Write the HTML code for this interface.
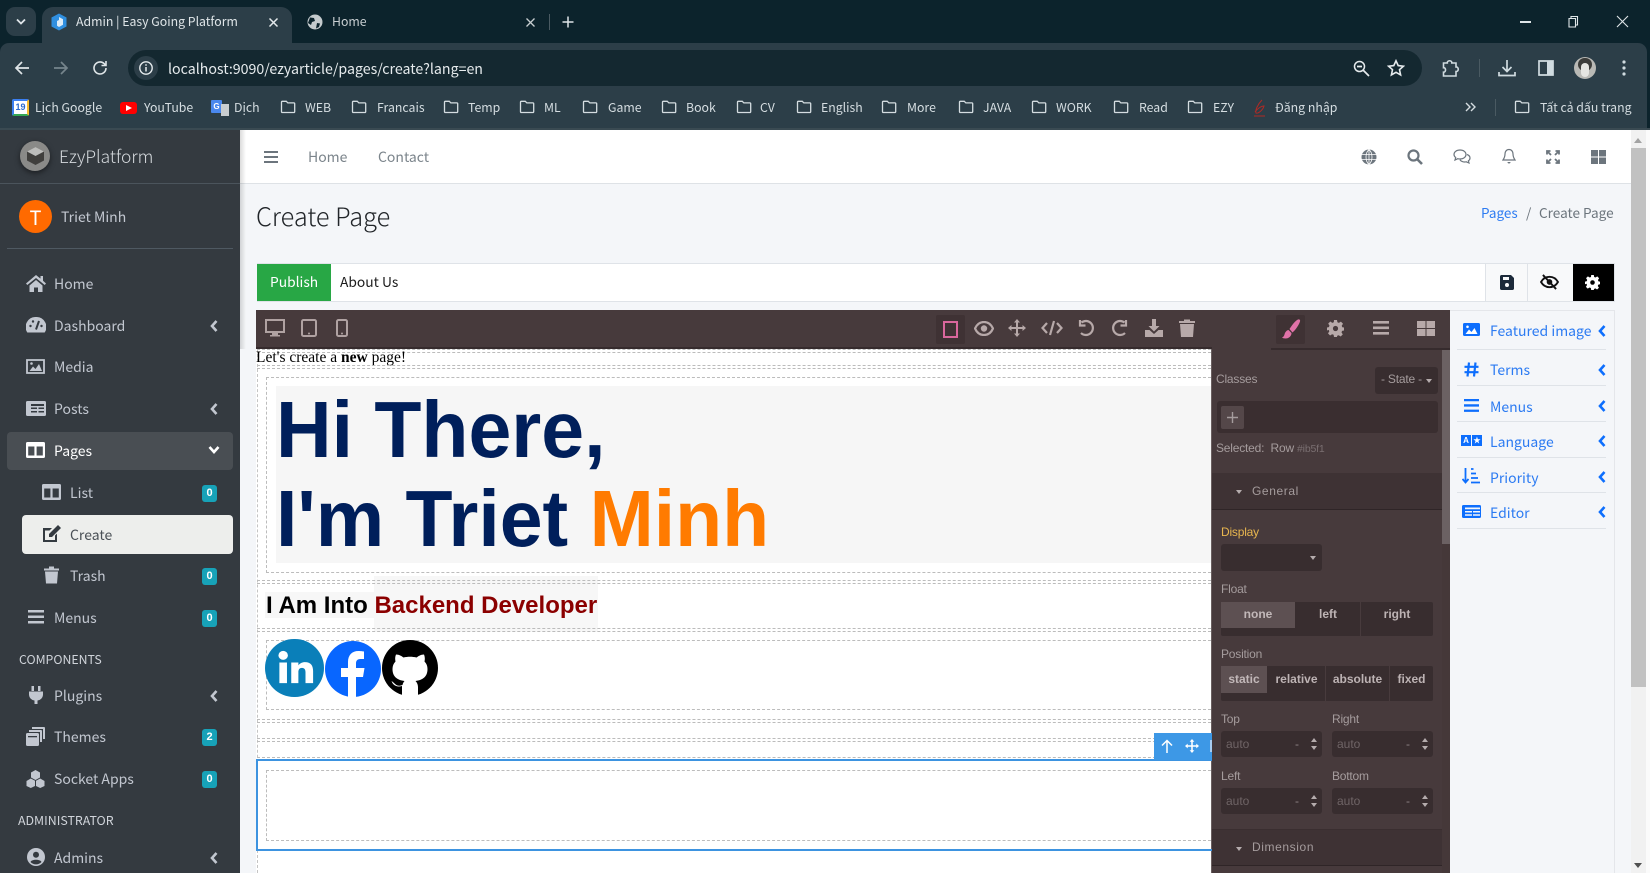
<!DOCTYPE html>
<html lang="en"><head><meta charset="utf-8"><title>Admin | Easy Going Platform</title>
<style>
*{box-sizing:border-box}
html,body{margin:0;padding:0;width:1650px;height:873px;overflow:hidden;background:#0c232c}
body{position:relative;font-family:"Noto Sans CJK JP","Liberation Sans",sans-serif}
div,span.t,svg{position:absolute}
.t{position:absolute;white-space:nowrap;line-height:20px;height:20px}
.c{color:#dfe5e8;font-size:12.3px}
.b{font-size:12.3px;color:#d5dde1;top:97px}
.s{font-size:14px;color:#c2c7d0}
.a{font-family:"Liberation Sans",Arial,sans-serif;font-size:12px;color:#a59c9d;letter-spacing:-.2px}
.r{font-size:14px;color:#2c7bf2}
.bd{left:202px;width:15px;height:17px;background:#17a2b8;border-radius:3px;color:#fff;font:bold 11px/17px "Liberation Sans",sans-serif;text-align:center}
.d2{left:257px;width:954px;height:4px;border-top:1px dashed #bcbcbc;border-bottom:1px dashed #bcbcbc}
.d1{left:257px;width:954px;height:1px;border-top:1px dashed #bcbcbc}
.bx{left:266px;width:945px;border:1px dashed #bcbcbc;border-right:0}
.btn{background:#382d2f}
.bt{font:bold 12px/20px "Liberation Sans",sans-serif;color:#bdb3b4;text-align:center;height:20px;position:absolute}
.in{background:#382d2f;border-radius:3px;width:101px;height:26px}
.au{position:absolute;left:5px;top:3px;font:12px/20px "Liberation Sans",sans-serif;color:#6f6466}
.das{position:absolute;left:74px;top:3px;font:12px/20px "Liberation Sans",sans-serif;color:#8c8284}
.up{position:absolute;left:90px;top:7px;width:0;height:0;border:3px solid transparent;border-top:0;border-bottom:4px solid #b5acad}
.dn{position:absolute;left:90px;top:15px;width:0;height:0;border:3px solid transparent;border-bottom:0;border-top:4px solid #b5acad}
.car{width:0;height:0;border:3px solid transparent;border-bottom:0;border-top:4px solid #b5acad}
.h{font:bold 77px/88px "Liberation Sans",sans-serif;height:88px;transform:scaleY(1.04);transform-origin:0 70.7px}
</style></head><body>
<svg width="0" height="0" style="position:absolute"><defs>
<symbol id="fo" viewBox="0 0 16 14"><path d="M1.5 2.2c0-.5.4-.9.9-.9h3.9l1.5 1.6h6c.5 0 .9.4.9.9v7.8c0 .5-.4.9-.9.9H2.400c-.5 0-.9-.4-.9-.9z" fill="none" stroke="#d5dde1" stroke-width="1.300"/></symbol>
<symbol id="cl" viewBox="0 0 10 14"><path d="M7.500 2 3 7l4.500 5" fill="none" stroke="currentColor" stroke-width="2.600"/></symbol>
</defs></svg>

<!-- chrome -->
<div style="left:0;top:0;width:1650px;height:130px;background:#0c232c"></div>
<div style="left:6px;top:7px;width:30px;height:29px;background:#2c3e48;border-radius:9px"></div>
<svg style="left:15px;top:18px" width="12" height="8" viewBox="0 0 12 8"><path d="M2 1.500 6 5.500l4-4" fill="none" stroke="#dfe5e8" stroke-width="1.800"/></svg>
<div style="left:0;top:43px;width:1647px;height:87px;background:#2c3e48;border-radius:9px 9px 0 0"></div>
<div style="left:42px;top:7px;width:250px;height:38px;background:#2c3e48;border-radius:11px 11px 0 0"></div>
<svg style="left:51px;top:13px" width="16" height="18" viewBox="0 0 16 18"><path d="M8 .5 15.500 4.500v9L8 17.500.5 13.500v-9z" fill="#2f8fe0"/><path d="M8 4l4 2.200v5.600L8 14l-2-1.200V8l2-1z" fill="#dcecf8"/></svg>
<span class="t c" style="left:76px;top:11px">Admin | Easy Going Platform</span>
<svg style="left:268px;top:17px" width="11" height="11" viewBox="0 0 11 11"><path d="M1.500 1.500l8 8m0-8-8 8" stroke="#e4e9ec" stroke-width="1.500"/></svg>
<svg style="left:307px;top:14px" width="16" height="16" viewBox="0 0 16 16"><circle cx="8" cy="8" r="7.500" fill="#c4cacd"/><path d="M3 3.500l4 .5 1 3-3 1-1 3-3-2zM10 9l3 .5-1 3.500-3 1.500z" fill="#0c232c"/></svg>
<span class="t c" style="left:332px;top:11px;color:#c8ced1">Home</span>
<svg style="left:525px;top:17px" width="11" height="11" viewBox="0 0 11 11"><path d="M1.500 1.500l8 8m0-8-8 8" stroke="#c8ced1" stroke-width="1.300"/></svg>
<div style="left:549px;top:14px;width:1px;height:16px;background:#4a5a62"></div>
<svg style="left:562px;top:16px" width="12" height="12" viewBox="0 0 12 12"><path d="M6 .5v11M.5 6h11" stroke="#dfe5e8" stroke-width="1.500"/></svg>
<div style="left:1520px;top:21px;width:11px;height:1.500px;background:#dfe5e8"></div>
<svg style="left:1567px;top:15px" width="12" height="13" viewBox="0 0 12 13"><path d="M2 3.500h6.500v8.500H2zM4 3.500V1.500h6.500v8.500H8.500" fill="none" stroke="#dfe5e8" stroke-width="1.100"/></svg>
<svg style="left:1616px;top:15px" width="13" height="13" viewBox="0 0 13 13"><path d="M1 1l11 11M12 1 1 12" stroke="#dfe5e8" stroke-width="1.100"/></svg>

<div style="left:0;top:128px;width:1650px;height:2px;background:#3a4a52"></div>
<svg style="left:14px;top:60px" width="16" height="16" viewBox="0 0 16 16"><path d="M15 8H2.500M8 2 2 8l6 6" fill="none" stroke="#dfe5e8" stroke-width="1.700"/></svg>
<svg style="left:53px;top:60px" width="16" height="16" viewBox="0 0 16 16"><path d="M1 8h12.500M8 2l6 6-6 6" fill="none" stroke="#76858c" stroke-width="1.700"/></svg>
<svg style="left:92px;top:60px" width="16" height="16" viewBox="0 0 16 16"><path d="M14 8a6 6 0 1 1-1.800-4.300L14 5.500M14 1v4.500H9.500" fill="none" stroke="#dfe5e8" stroke-width="1.600"/></svg>
<div style="left:128px;top:50px;width:1294px;height:36px;background:#142830;border-radius:18px"></div>
<div style="left:134px;top:56px;width:24px;height:24px;border-radius:12px;background:#2c3e48"></div>
<svg style="left:139px;top:61px" width="14" height="14" viewBox="0 0 14 14"><circle cx="7" cy="7" r="6.200" fill="none" stroke="#e6ebed" stroke-width="1.400"/><path d="M7 6v4.500M7 3.200v1.600" stroke="#e6ebed" stroke-width="1.500"/></svg>
<span class="t" style="left:168px;top:59px;font-size:14.200px;color:#e6ebed">localhost:9090/ezyarticle/pages/create?lang=en</span>
<svg style="left:1353px;top:60px" width="17" height="17" viewBox="0 0 17 17"><circle cx="6.500" cy="6.500" r="5" fill="none" stroke="#e6ebed" stroke-width="1.500"/><path d="M10 10l6 6M4 6.500h5" stroke="#e6ebed" stroke-width="1.700"/></svg>
<svg style="left:1387px;top:59px" width="18" height="18" viewBox="0 0 18 18"><path d="M9 1.800l2.200 4.800 5.200.6-3.900 3.500 1.100 5.200L9 13.300l-4.600 2.600 1.100-5.200-3.900-3.500 5.200-.6z" fill="none" stroke="#e6ebed" stroke-width="1.600"/></svg>
<svg style="left:1442px;top:58px" width="18" height="20" viewBox="0 0 18 20"><path d="M1.500 5h3.800c-.3-3 4.900-3 4.500 0h4.200v4c3-.3 3 4.700 0 4.500V18h-12.500v-3.800c2.700.3 2.700-5 0-4.500z" fill="none" stroke="#d0dbe0" stroke-width="1.600"/></svg>
<div style="left:1479px;top:59px;width:1px;height:18px;background:#4a5a62"></div>
<svg style="left:1498px;top:59px" width="18" height="18" viewBox="0 0 18 18"><path d="M9 1v11M4.500 8 9 12.500 13.500 8M1 13v3.500h16V13" fill="none" stroke="#d0dbe0" stroke-width="1.700"/></svg>
<svg style="left:1538px;top:60px" width="16" height="16" viewBox="0 0 16 16"><path d="M1 1h14v14H1z" fill="none" stroke="#d0dbe0" stroke-width="1.700"/><path d="M9 1h6v14H9z" fill="#d0dbe0"/></svg>
<div style="left:1574px;top:57px;width:22px;height:22px;border-radius:11px;background:#b9b9b5"></div>
<div style="left:1578px;top:58px;width:14px;height:13px;border-radius:7px;background:#3d3d3a"></div>
<div style="left:1581px;top:63px;width:8px;height:14px;border-radius:4px;background:#e6e6e2"></div>
<svg style="left:1622px;top:60px" width="4" height="16" viewBox="0 0 4 16"><circle cx="2" cy="2" r="1.600" fill="#d0dbe0"/><circle cx="2" cy="8" r="1.600" fill="#d0dbe0"/><circle cx="2" cy="14" r="1.600" fill="#d0dbe0"/></svg>

<!-- bookmarks -->
<div style="left:12px;top:99px;width:17px;height:17px;background:#fff;border:2px solid #3b7ff0;border-right-color:#f9bb2d;border-bottom-color:#34a853;border-radius:2px;color:#2a6ad0;font:bold 9px/13px 'Liberation Sans',sans-serif;text-align:center">19</div>
<span class="t b" style="left:35px">Lịch Google</span>
<div style="left:120px;top:102px;width:17px;height:12px;background:#f00;border-radius:3px"></div>
<svg style="left:126px;top:105px" width="6" height="6" viewBox="0 0 6 6"><path d="M0 0l6 3-6 3z" fill="#fff"/></svg>
<span class="t b" style="left:144px">YouTube</span>
<div style="left:211px;top:100px;width:11px;height:13px;background:#4a88ee;border-radius:1px;color:#fff;font:bold 8px/13px 'Liberation Sans',sans-serif;text-align:center">G</div>
<div style="left:221px;top:104px;width:8px;height:12px;background:#c9cdd0"></div>
<span class="t b" style="left:234px">Dịch</span>
<svg style="left:280px;top:100px" width="16" height="14"><use href="#fo"/></svg><span class="t b" style="left:305px">WEB</span>
<svg style="left:351px;top:100px" width="16" height="14"><use href="#fo"/></svg><span class="t b" style="left:377px">Francais</span>
<svg style="left:443px;top:100px" width="16" height="14"><use href="#fo"/></svg><span class="t b" style="left:468px">Temp</span>
<svg style="left:519px;top:100px" width="16" height="14"><use href="#fo"/></svg><span class="t b" style="left:544px">ML</span>
<svg style="left:582px;top:100px" width="16" height="14"><use href="#fo"/></svg><span class="t b" style="left:608px">Game</span>
<svg style="left:661px;top:100px" width="16" height="14"><use href="#fo"/></svg><span class="t b" style="left:686px">Book</span>
<svg style="left:736px;top:100px" width="16" height="14"><use href="#fo"/></svg><span class="t b" style="left:760px">CV</span>
<svg style="left:796px;top:100px" width="16" height="14"><use href="#fo"/></svg><span class="t b" style="left:821px">English</span>
<svg style="left:881px;top:100px" width="16" height="14"><use href="#fo"/></svg><span class="t b" style="left:907px">More</span>
<svg style="left:958px;top:100px" width="16" height="14"><use href="#fo"/></svg><span class="t b" style="left:983px">JAVA</span>
<svg style="left:1031px;top:100px" width="16" height="14"><use href="#fo"/></svg><span class="t b" style="left:1056px">WORK</span>
<svg style="left:1113px;top:100px" width="16" height="14"><use href="#fo"/></svg><span class="t b" style="left:1139px">Read</span>
<svg style="left:1187px;top:100px" width="16" height="14"><use href="#fo"/></svg><span class="t b" style="left:1213px">EZY</span>
<svg style="left:1253px;top:99px" width="14" height="18" viewBox="0 0 14 18"><path d="M9 1C5 5 2 11 3 14c2 1 7-3 8-7-3 0-7 3-9 6M1 17h11" fill="none" stroke="#b02a25" stroke-width="1"/></svg>
<span class="t b" style="left:1275px">Đăng nhập</span>
<svg style="left:1465px;top:102px" width="11" height="10" viewBox="0 0 11 10"><path d="M1 1l4 4-4 4M6 1l4 4-4 4" fill="none" stroke="#d5dde1" stroke-width="1.400"/></svg>
<div style="left:1495px;top:99px;width:1px;height:17px;background:#4a5a62"></div>
<svg style="left:1514px;top:100px" width="16" height="14"><use href="#fo"/></svg><span class="t b" style="left:1540px">Tất cả dấu trang</span>

<!-- sidebar -->
<div style="left:0;top:130px;width:240px;height:743px;background:#343a40"></div>
<div style="left:0;top:183px;width:240px;height:1px;background:#4b545c"></div>
<div style="left:20px;top:141px;width:30px;height:30px;border-radius:15px;background:#8a8a88;box-shadow:0 2px 6px rgba(0,0,0,.5)"></div>
<svg style="left:26px;top:146px" width="19" height="20" viewBox="0 0 19 20"><path d="M9.500 1 18 5.500v9L9.500 19 1 14.500v-9z" fill="#403f3d"/><path d="M9.500 1 18 5.500 9.500 10 1 5.500z" fill="#bdbdbb"/></svg>
<span class="t" style="left:59px;top:147px;font-size:17.400px;font-weight:300;color:#d5d9dd">EzyPlatform</span>
<div style="left:19px;top:200px;width:33px;height:33px;border-radius:17px;background:#ff6a00;color:#fff;font:20px/33px 'Noto Sans CJK JP',sans-serif;text-align:center">T</div>
<span class="t s" style="left:61px;top:207px">Triet Minh</span>
<div style="left:7px;top:248px;width:226px;height:1px;background:#4f5962"></div>

<div style="left:7px;top:432px;width:226px;height:38px;background:#494e53;border-radius:4px"></div>
<div style="left:22px;top:515px;width:211px;height:39px;background:#edeeec;border-radius:4px"></div>

<svg style="left:26px;top:275px" width="20" height="17" viewBox="0 0 20 17" fill="#c2c7d0"><path d="M10 0 0 8.500l1.300 1.500L10 3l8.700 7L20 8.500l-3-2.700V1h-2.500v2.600zM3.500 10.500V17H8v-4.500h4V17h4.500v-6.500L10 5z"/></svg>
<span class="t s" style="left:54px;top:274px">Home</span>
<svg style="left:26px;top:317px" width="20" height="16" viewBox="0 0 20 16"><path d="M10 0a10 10 0 0 0-8.700 15.500h17.400A10 10 0 0 0 10 0z" fill="#c2c7d0"/><path d="M10 12.500 13 4" stroke="#343a40" stroke-width="2"/><circle cx="4.500" cy="9" r="1.200" fill="#343a40"/><circle cx="7" cy="4.500" r="1.200" fill="#343a40"/><circle cx="15.500" cy="9" r="1.200" fill="#343a40"/></svg>
<span class="t s" style="left:54px;top:316px">Dashboard</span>
<svg style="left:26px;top:359px" width="19" height="15" viewBox="0 0 19 15"><path d="M1 1h17v13H1z" fill="none" stroke="#c2c7d0" stroke-width="1.800"/><path d="M3.500 12 7 7.500l2.500 2.500 3.500-5 3 7z" fill="#c2c7d0"/><circle cx="5.500" cy="4.500" r="1.300" fill="#c2c7d0"/></svg>
<span class="t s" style="left:54px;top:357px">Media</span>
<svg style="left:26px;top:401px" width="20" height="15" viewBox="0 0 20 15"><rect width="20" height="15" rx="1.500" fill="#c2c7d0"/><path d="M5 3h13v2H5zM5 6.500h6v1.500H5zM12.500 6.500H18v1.500h-5.500zM5 10h6v1.500H5zM12.500 10H18v1.500h-5.500z" fill="#343a40"/></svg>
<span class="t s" style="left:54px;top:399px">Posts</span>
<svg style="left:26px;top:442px" width="19" height="16" viewBox="0 0 19 16"><rect width="19" height="16" rx="1.500" fill="#fff"/><path d="M2.200 4.500h6.200v9H2.200zM10.600 4.500h6.200v9h-6.200z" fill="#494e53"/></svg>
<span class="t s" style="left:54px;top:441px;color:#fff">Pages</span>
<svg style="left:42px;top:484px" width="19" height="16" viewBox="0 0 19 16"><rect width="19" height="16" rx="1.500" fill="#c2c7d0"/><path d="M2.200 4.500h6.200v9H2.200zM10.600 4.500h6.200v9h-6.200z" fill="#343a40"/></svg>
<span class="t s" style="left:70px;top:483px">List</span>
<svg style="left:41px;top:524px" width="21" height="19" viewBox="0 0 21 19"><path d="M2 4h9L8.500 6.500H4V16h10v-4.500L16 9.500V18H2z" fill="#343a40"/><path d="M17 1l3 3-9 9H8v-3z" fill="#343a40"/></svg>
<span class="t s" style="left:70px;top:525px;color:#4a5056">Create</span>
<svg style="left:44px;top:566px" width="15" height="18" viewBox="0 0 15 18" fill="#c2c7d0"><path d="M0 2.500h5V.5h5v2h5v2H0zM1 5.500h13l-1 12H2z"/></svg>
<span class="t s" style="left:70px;top:566px">Trash</span>
<svg style="left:28px;top:610px" width="16" height="14" viewBox="0 0 16 14" fill="#c2c7d0"><path d="M0 0h16v2.500H0zM0 5.500h16V8H0zM0 11h16v2.500H0z"/></svg>
<span class="t s" style="left:54px;top:608px">Menus</span>
<span class="t" style="left:19px;top:649px;font-size:12.300px;color:#d0d4da">COMPONENTS</span>
<svg style="left:29px;top:686px" width="14" height="18" viewBox="0 0 14 18" fill="#c2c7d0"><path d="M2.500 0H5v5H2.500zM9 0h2.500v5H9zM0 5.500h14V9a6 6 0 0 1-5.500 5.500V18h-3v-3.500A6 6 0 0 1 0 9z"/></svg>
<span class="t s" style="left:54px;top:686px">Plugins</span>
<svg style="left:26px;top:727px" width="19" height="19" viewBox="0 0 19 19"><path d="M6 0h12a1 1 0 0 1 1 1v11h-2V2H6zM3 3h12a1 1 0 0 1 1 1v11h-2V5H3z" fill="#c2c7d0"/><rect y="6" width="13" height="13" rx="1.500" fill="#c2c7d0"/><rect x="2" y="9" width="9" height="1.300" fill="#343a40"/></svg>
<span class="t s" style="left:54px;top:727px">Themes</span>
<svg style="left:26px;top:770px" width="19" height="18" viewBox="0 0 19 18" fill="#c2c7d0"><path d="M9.500 0 14 2.500v5L9.500 10 5 7.500v-5z"/><path d="M4.800 8.500l4.200 2.300V16l-4.200 2L.5 16v-5z"/><path d="M14.200 8.500l4.300 2.500v5l-4.300 2L10 16v-5.200z"/></svg>
<span class="t s" style="left:54px;top:769px">Socket Apps</span>
<span class="t" style="left:18px;top:810px;font-size:12.400px;color:#d0d4da">ADMINISTRATOR</span>
<svg style="left:27px;top:848px" width="18" height="18" viewBox="0 0 18 18"><circle cx="9" cy="9" r="9" fill="#c2c7d0"/><circle cx="9" cy="6.800" r="3" fill="#343a40"/><path d="M3.500 14c1-3 10-3 11 0a7.500 7.500 0 0 1-11 0z" fill="#343a40"/></svg>
<span class="t s" style="left:54px;top:848px">Admins</span>

<svg style="left:209px;top:319px;color:#c2c7d0" width="10" height="14"><use href="#cl"/></svg>
<svg style="left:209px;top:402px;color:#c2c7d0" width="10" height="14"><use href="#cl"/></svg>
<svg style="left:209px;top:689px;color:#c2c7d0" width="10" height="14"><use href="#cl"/></svg>
<svg style="left:209px;top:851px;color:#c2c7d0" width="10" height="14"><use href="#cl"/></svg>
<svg style="left:208px;top:445px" width="12" height="10" viewBox="0 0 12 10"><path d="M1.500 2 6 7l4.500-5" fill="none" stroke="#fff" stroke-width="2.600"/></svg>
<div class="bd" style="top:485px">0</div><div class="bd" style="top:568px">0</div><div class="bd" style="top:610px">0</div><div class="bd" style="top:729px">2</div><div class="bd" style="top:771px">0</div>

<!-- main -->
<div style="left:240px;top:130px;width:1391px;height:743px;background:#f4f6f9"></div>
<div style="left:240px;top:130px;width:1391px;height:54px;background:#fff;border-bottom:1px solid #dee2e6"></div>
<div style="left:240px;top:130px;width:6px;height:743px;background:linear-gradient(90deg,rgba(0,0,0,.14),rgba(0,0,0,0))"></div>
<svg style="left:264px;top:151px" width="14" height="12" viewBox="0 0 14 12" fill="#6c757d"><path d="M0 0h14v2H0zM0 5h14v2H0zM0 10h14v2H0z"/></svg>
<span class="t" style="left:308px;top:147px;font-size:14px;color:#7b848b">Home</span>
<span class="t" style="left:378px;top:147px;font-size:14px;color:#7b848b">Contact</span>
<svg style="left:1361px;top:149px" width="16" height="16" viewBox="0 0 16 16"><circle cx="8" cy="8" r="7.500" fill="#6c757d"/><path d="M.5 5.500h15M.5 10.500h15M8 .5v15M8 .5C4 4 4 12 8 15.500M8 .5c4 3.500 4 11.500 0 15" fill="none" stroke="#fff" stroke-width=".8"/></svg>
<svg style="left:1407px;top:149px" width="16" height="16" viewBox="0 0 16 16"><circle cx="6.500" cy="6.500" r="5" fill="none" stroke="#6c757d" stroke-width="2.200"/><path d="M10.500 10.500 15 15" stroke="#6c757d" stroke-width="2.600"/></svg>
<svg style="left:1453px;top:149px" width="18" height="16" viewBox="0 0 18 16"><path d="M7 1c3.500 0 6 2 6 4.500S10.500 10 7 10c-.7 0-1.500 0-2.200-.3L2 11l.7-2.500C1.600 7.700 1 6.700 1 5.500 1 3 3.500 1 7 1zM14 5.500c2 .7 3 2 3 3.500 0 1.100-.6 2.100-1.600 2.800L16 14l-2.800-1.200c-2.200.6-5-.1-6.200-2" fill="none" stroke="#6c757d" stroke-width="1.200"/></svg>
<svg style="left:1502px;top:148px" width="14" height="17" viewBox="0 0 14 17"><path d="M7 1.500c-2.500 0-4 2-4 4.500 0 3-1 4.500-2 6h12c-1-1.500-2-3-2-6 0-2.500-1.500-4.500-4-4.500z" fill="none" stroke="#6c757d" stroke-width="1.200"/><path d="M5.500 14a1.500 1.500 0 0 0 3 0z" fill="#6c757d"/></svg>
<svg style="left:1546px;top:150px" width="14" height="14" viewBox="0 0 14 14"><path d="M5 5 1 1m0 3.500V1h3.500M9 5l4-4m-3.500 0H13v3.500M5 9l-4 4m0-3.500V13h3.500M9 9l4 4m0-3.500V13H9.500" fill="none" stroke="#6c757d" stroke-width="1.800"/></svg>
<svg style="left:1591px;top:150px" width="15" height="14" viewBox="0 0 15 14" fill="#6c757d"><path d="M0 0h7v6.500H0zM8 0h7v6.500H8zM0 7.500h7V14H0zM8 7.500h7V14H8z"/></svg>

<span class="t" style="left:256px;top:206px;font-size:25.300px;font-weight:300;color:#212529">Create Page</span>
<span class="t" style="left:1481px;top:202px;font-size:13.500px;color:#2c7bf2">Pages</span>
<span class="t" style="left:1526px;top:202px;font-size:13.500px;color:#6c757d">/</span>
<span class="t" style="left:1539px;top:202px;font-size:13.600px;color:#6c757d">Create Page</span>

<!-- publish bar -->
<div style="left:257px;top:263px;width:1358px;height:39px;background:#fff;border:1px solid #dfe3e8"></div>
<div style="left:257px;top:264px;width:74px;height:37px;background:#28a745"></div>
<span class="t" style="left:270px;top:271px;font-size:13.800px;color:#fff">Publish</span>
<span class="t" style="left:340px;top:271px;font-size:13.800px;color:#1c1c1c">About Us</span>
<div style="left:1485px;top:264px;width:43px;height:37px;background:#f8f9fa;border-left:1px solid #dfe3e8;border-right:1px solid #dfe3e8"></div>
<div style="left:1528px;top:264px;width:45px;height:37px;background:#f8f9fa"></div>
<div style="left:1573px;top:264px;width:41px;height:37px;background:#000"></div>
<svg style="left:1500px;top:275px" width="14" height="15" viewBox="0 0 14 15"><path d="M0 1.500C0 .700.700 0 1.500 0H11l3 3v10.500c0 .800-.700 1.500-1.500 1.500h-11C.700 15 0 14.300 0 13.500z" fill="#1c2a3a"/><path d="M3 2h6v3H3z" fill="#f8f9fa"/><circle cx="7" cy="10" r="2" fill="#f8f9fa"/></svg>
<svg style="left:1540px;top:274px" width="19" height="16" viewBox="0 0 20 17"><path d="M1 8.500C3 5 6 3 10 3s7 2 9 5.500c-2 3.500-5 5.500-9 5.500S3 12 1 8.500z" fill="none" stroke="#111" stroke-width="2"/><circle cx="10" cy="8.500" r="3" fill="#111"/><path d="M3 1l14 15" stroke="#111" stroke-width="2"/></svg>
<svg style="left:1585px;top:275px" width="15" height="15" viewBox="0 0 17 17"><path d="M7 0h3l.4 2.300 1.500.6L13.900 1.600 16 3.700l-1.300 2 .6 1.500L17 7.500v3l-1.900.4-.6 1.500 1.300 2-2.100 2.100-2-1.300-1.500.6L10 17H7l-.4-2.200-1.500-.6-2 1.300L1 13.400l1.300-2-.6-1.500L0 10.500v-3l1.900-.4.6-1.500-1.300-2L3.300 1.500l2 1.400 1.500-.6z" fill="#fff"/><circle cx="8.500" cy="8.500" r="2.600" fill="#000"/></svg>

<!-- editor -->
<div style="left:256px;top:310px;width:1194px;height:39px;background:#473a3c;border-bottom:2px solid #362b2d"></div>
<div style="left:256px;top:349px;width:956px;height:524px;background:#fff"></div>
<div style="left:1211px;top:349px;width:1px;height:524px;background:#6a5f60"></div>

<svg style="left:265px;top:319px" width="20" height="18" viewBox="0 0 20 18"><path d="M1 1h18v12H1z" fill="none" stroke="#b0a2a2" stroke-width="2"/><path d="M7 14h6v2h2v1.500H5V16h2z" fill="#b0a2a2"/></svg>
<svg style="left:301px;top:319px" width="16" height="18" viewBox="0 0 16 18"><rect x="1" y="1" width="14" height="16" rx="1.500" fill="none" stroke="#b0a2a2" stroke-width="2"/><circle cx="8" cy="14.500" r="1" fill="#b0a2a2"/></svg>
<svg style="left:336px;top:319px" width="12" height="18" viewBox="0 0 12 18"><rect x="1" y="1" width="10" height="16" rx="1.500" fill="none" stroke="#b0a2a2" stroke-width="2"/><circle cx="6" cy="14.500" r="1" fill="#b0a2a2"/></svg>

<div style="left:936px;top:315px;width:29px;height:29px;background:#3f3234;border-radius:2px"></div>
<div style="left:943px;top:321px;width:15px;height:17px;border:2px solid #d9679c"></div>
<svg style="left:974px;top:321px" width="20" height="15" viewBox="0 0 20 15"><path d="M1 7.500C3 3 6 1 10 1s7 2 9 6.500C17 12 14 14 10 14s-7-2-9-6.500z" fill="none" stroke="#b7a9a9" stroke-width="2.200"/><circle cx="10" cy="7.500" r="3.200" fill="#b7a9a9"/></svg>
<svg style="left:1008px;top:319px" width="18" height="18" viewBox="0 0 18 18" fill="#b7a9a9"><path d="M9 0l3 3.500h-2V8h4.500V6L18 9l-3.500 3v-2H10v4.500h2L9 18l-3-3.500h2V10H3.500v2L0 9l3.500-3v2H8V3.500H6z"/></svg>
<svg style="left:1041px;top:320px" width="22" height="16" viewBox="0 0 22 16"><path d="M6 3 1.500 8 6 13M16 3l4.500 5L16 13M13 1 9 15" fill="none" stroke="#b7a9a9" stroke-width="2.200"/></svg>
<svg style="left:1077px;top:319px" width="18" height="18" viewBox="0 0 18 18"><path d="M4.500 3.500A7 7 0 1 1 4 14M3 1v5.500h5.500" fill="none" stroke="#b7a9a9" stroke-width="2.200"/></svg>
<svg style="left:1111px;top:319px" width="18" height="18" viewBox="0 0 18 18"><path d="M13.500 3.500A7 7 0 1 0 14 14M15 1v5.500H9.500" fill="none" stroke="#b7a9a9" stroke-width="2.200"/></svg>
<svg style="left:1145px;top:319px" width="18" height="18" viewBox="0 0 18 18" fill="#b7a9a9"><path d="M7 0h4v7h3.500L9 12.500 3.500 7H7zM0 11h4.500L9 15l4.500-4H18v7H0z"/></svg>
<svg style="left:1179px;top:319px" width="16" height="18" viewBox="0 0 16 18" fill="#b7a9a9"><path d="M0 2h5V.5h6V2h5v2H0zM1 5h14l-1 13H2z"/></svg>

<!-- canvas -->
<div style="left:240px;top:349px;width:16px;height:524px;background:#f4f6f9"></div>
<div style="left:257px;top:349px;width:1px;height:524px;border-left:1px dashed #c4c4c4"></div>
<div class="d2" style="top:349px"></div>
<span class="t" style="left:256px;top:348px;font:15.500px/20px 'Liberation Serif',serif;color:#000">Let's create a <b>new</b> page!</span>
<div class="d2" style="top:365px"></div>
<div class="bx" style="top:377px;height:196px"></div>
<div style="left:276px;top:386px;width:935px;height:177px;background:#f6f6f6"></div>
<span class="t h" style="left:276px;top:387px;color:#001f5b">Hi There,</span>
<span class="t h" style="left:276px;top:476px;color:#001f5b">I'm Triet <span style="color:#ff7b00">Minh</span></span>
<div style="left:374px;top:576px;width:224px;height:56px;background:#f7f7f7"></div>
<div style="left:265px;top:592px;width:109px;height:26px;background:#f7f7f7"></div>
<div class="d2" style="top:580px"></div>
<div class="d2" style="top:628px"></div>
<span class="t" style="left:266px;top:596px;height:20px;font:bold 24px/20px 'Liberation Sans',sans-serif;color:#000">I Am Into <span style="color:#8b0000">Backend Developer</span></span>
<div class="bx" style="top:640px;height:70px"></div>
<div style="left:265px;top:639px;width:59px;height:58px;border-radius:30px;background:#0a7fb9"></div>
<svg style="left:277px;top:650px" width="38" height="34" viewBox="0 0 40 38" preserveAspectRatio="none" fill="#fff"><circle cx="6.500" cy="6" r="5"/><path d="M2.500 14h8v23h-8zM15 14h7.500v3.200c1.500-2.400 4-3.700 7-3.700 6 0 8.500 3.800 8.500 10V37h-8V25c0-3-1-5-3.700-5-3 0-3.800 2.200-3.800 5v12H15z"/></svg>
<svg style="left:325px;top:641px" width="56" height="56" viewBox="0 0 56 56"><circle cx="28" cy="28" r="28" fill="#0866ff"/><path d="M23 56V36h-7v-9h7v-6c0-7 4-11 10.500-11 2.500 0 5.500.5 5.500.5V18h-3.500c-3.500 0-4.500 2-4.500 4.500V27h8.500l-1.500 9h-7v20z" fill="#fff"/></svg>
<svg style="left:382px;top:640px" width="56" height="56" viewBox="0 0 56 56"><circle cx="28" cy="28" r="28" fill="#000"/><path d="M20 56V46c-6 1.500-9-1-10.500-5 2.500 1.500 4 4 6 4.500 2 .5 3.500 0 5-.5.300-1.500 1-3 2-4-7-1-12-4-12-12 0-3 1-5.500 3-7.500-.5-2-.5-4.500.5-7 3 0 5.500 1.500 7.500 3 4-1 9-1 13 0 2-1.500 4.500-3 7.500-3 1 2.500 1 5 .5 7 2 2 3 4.500 3 7.500 0 8-5 11-12 12 1.500 1.500 2.500 3.500 2.500 6.500v11z" fill="#fff"/></svg>
<div class="d2" style="top:719px"></div>
<div class="d2" style="top:738px"></div>
<div class="d1" style="top:757px"></div>
<div style="left:256px;top:759px;width:956px;height:92px;border:2px solid #3d93e0;border-right:0"></div>
<div class="bx" style="top:770px;height:71px"></div>
<div style="left:1154px;top:733px;width:58px;height:27px;background:#3d98e6"></div>
<svg style="left:1161px;top:739px" width="12" height="14" viewBox="0 0 12 14"><path d="M6 14V2M1 6.500 6 1.500l5 5" fill="none" stroke="#fff" stroke-width="1.500"/></svg>
<svg style="left:1185px;top:739px" width="14" height="14" viewBox="0 0 18 18" fill="#fff"><path d="M9 0l3 3.500h-2V8h4.500V6L18 9l-3.500 3v-2H10v4.500h2L9 18l-3-3.500h2V10H3.500v2L0 9l3.500-3v2H8V3.500H6z"/></svg>
<div style="left:1210px;top:740px;width:2px;height:12px;background:#a7cdf2"></div>

<!-- style panel -->
<div style="left:1212px;top:310px;width:238px;height:563px;background:#473a3c"></div>
<div style="left:1271px;top:348px;width:179px;height:2px;background:#362b2d"></div>
<div style="left:1276px;top:315px;width:29px;height:29px;background:#3f3234;border-radius:2px"></div>
<svg style="left:1281px;top:319px" width="20" height="20" viewBox="0 0 20 20"><path d="M17 .5c1.500-.5 2.500.5 2 2-1 3-4 8-7.500 11L8.500 10c2.500-4 6-8.500 8.500-9.500z" fill="#e072a8"/><path d="M7.500 11l3 3c0 3-2.500 5.500-6 5.500-1.500 0-3-.5-3.500-1 1.500-.5 2-1.500 2.500-3 .5-2.500 2.500-4.500 4-4.500z" fill="#e072a8"/></svg>
<svg style="left:1327px;top:320px" width="17" height="17" viewBox="0 0 17 17"><path d="M7 0h3l.4 2.300 1.500.6L13.900 1.600 16 3.700l-1.300 2 .6 1.500L17 7.500v3l-1.900.4-.6 1.500 1.300 2-2.100 2.100-2-1.300-1.500.6L10 17H7l-.4-2.200-1.500-.6-2 1.300L1 13.400l1.300-2-.6-1.500L0 10.500v-3l1.900-.4.6-1.500-1.300-2L3.300 1.500l2 1.400 1.500-.6z" fill="#b7a9a9"/><circle cx="8.500" cy="8.500" r="2.600" fill="#473a3c"/></svg>
<svg style="left:1373px;top:321px" width="16" height="14" viewBox="0 0 16 14" fill="#b7a9a9"><path d="M0 0h16v2.600H0zM0 5.500h16v2.600H0zM0 11h16v2.600H0z"/></svg>
<svg style="left:1417px;top:321px" width="18" height="15" viewBox="0 0 18 15" fill="#b7a9a9"><path d="M0 0h8.500v7H0zM9.500 0H18v7H9.500zM0 8h8.500v7H0zM9.500 8H18v7H9.500z"/></svg>

<div style="left:1442px;top:350px;width:8px;height:523px;background:#453839"></div>
<div style="left:1442px;top:350px;width:8px;height:194px;background:#6b6163"></div>

<span class="t a" style="left:1216px;top:369px">Classes</span>
<div style="left:1375px;top:367px;width:63px;height:27px;background:#382d2f;border-radius:3px"></div>
<span class="t a" style="left:1381px;top:369px">- State -</span>
<div class="car" style="left:1426px;top:379px"></div>
<div style="left:1217px;top:401px;width:221px;height:32px;background:#3a2e30;border-radius:3px"></div>
<div style="left:1221px;top:406px;width:23px;height:23px;background:#544749;border-radius:2px"></div>
<svg style="left:1227px;top:412px" width="11" height="11" viewBox="0 0 11 11"><path d="M5.500 0v11M0 5.500h11" stroke="#a59c9d" stroke-width="1.400"/></svg>
<span class="t a" style="left:1216px;top:438px">Selected:&nbsp; Row <span style="font-size:10.500px;color:#7a6f71">#ib5f1</span></span>

<div style="left:1212px;top:473px;width:230px;height:37px;background:#3e3234;border-bottom:1px solid #2f2527"></div>
<div class="car" style="left:1236px;top:490px"></div>
<span class="t a" style="left:1252px;top:481px;letter-spacing:.6px">General</span>

<span class="t a" style="left:1221px;top:522px;color:#e8b64f">Display</span>
<div class="in" style="left:1221px;top:544px;height:27px"></div>
<div class="car" style="left:1310px;top:556px"></div>

<span class="t a" style="left:1221px;top:579px">Float</span>
<div style="left:1221px;top:602px;width:212px;height:34px;background:#382d2f;border-radius:2px"></div>
<div style="left:1221px;top:602px;width:74px;height:26px;background:#5d5052"></div>
<div style="left:1360px;top:602px;width:1px;height:34px;background:#483b3d"></div>
<span class="bt" style="left:1221px;top:604px;width:74px;color:#c2b8b9">none</span>
<span class="bt" style="left:1296px;top:604px;width:64px">left</span>
<span class="bt" style="left:1361px;top:604px;width:72px">right</span>

<span class="t a" style="left:1221px;top:644px">Position</span>
<div style="left:1221px;top:666px;width:212px;height:35px;background:#382d2f;border-radius:2px"></div>
<div style="left:1221px;top:666px;width:46px;height:27px;background:#5d5052"></div>
<div style="left:1325px;top:666px;width:1px;height:35px;background:#483b3d"></div>
<div style="left:1389px;top:666px;width:1px;height:35px;background:#483b3d"></div>
<span class="bt" style="left:1221px;top:669px;width:46px;color:#c2b8b9">static</span>
<span class="bt" style="left:1268px;top:669px;width:57px">relative</span>
<span class="bt" style="left:1326px;top:669px;width:63px">absolute</span>
<span class="bt" style="left:1390px;top:669px;width:43px">fixed</span>

<span class="t a" style="left:1221px;top:709px">Top</span>
<span class="t a" style="left:1332px;top:709px">Right</span>
<div class="in" style="left:1221px;top:731px"><span class="au">auto</span><span class="das">-</span><i class="up"></i><i class="dn"></i></div>
<div class="in" style="left:1332px;top:731px"><span class="au">auto</span><span class="das">-</span><i class="up"></i><i class="dn"></i></div>
<span class="t a" style="left:1221px;top:766px">Left</span>
<span class="t a" style="left:1332px;top:766px">Bottom</span>
<div class="in" style="left:1221px;top:788px"><span class="au">auto</span><span class="das">-</span><i class="up"></i><i class="dn"></i></div>
<div class="in" style="left:1332px;top:788px"><span class="au">auto</span><span class="das">-</span><i class="up"></i><i class="dn"></i></div>

<div style="left:1212px;top:829px;width:230px;height:37px;background:#3e3234;border-top:1px solid #3a2e30;border-bottom:1px solid #2f2527"></div>
<div class="car" style="left:1236px;top:847px"></div>
<span class="t a" style="left:1252px;top:837px;letter-spacing:.6px">Dimension</span>

<!-- right column -->
<div style="left:1450px;top:310px;width:165px;height:563px;background:#f4f6f9;border-right:1px solid #e4e6ea;border-top:1px solid #e4e6ea"></div>
<svg style="left:1463px;top:323px" width="17" height="13" viewBox="0 0 17 13"><rect width="17" height="13" rx="1.500" fill="#0d6efd"/><path d="M2.500 11 6 6.500l2.500 2.500 3-4 3 6z" fill="#fff"/><circle cx="4.500" cy="3.800" r="1.300" fill="#fff"/></svg>
<span class="t r" style="left:1490px;top:321px">Featured image</span>
<div style="left:1457px;top:349px;width:149px;height:1px;background:#dfe3e8"></div>
<svg style="left:1464px;top:362px" width="15" height="15" viewBox="0 0 15 15"><path d="M5 .5 3.500 14.500M11.500.5 10 14.500M.5 4.800h14M.5 10.200h14" fill="none" stroke="#0d6efd" stroke-width="2.200"/></svg>
<span class="t r" style="left:1490px;top:360px">Terms</span>
<div style="left:1457px;top:385px;width:149px;height:1px;background:#dfe3e8"></div>
<svg style="left:1464px;top:399px" width="15" height="13" viewBox="0 0 15 13" fill="#0d6efd"><path d="M0 0h15v2.300H0zM0 5.300h15v2.300H0zM0 10.600h15v2.300H0z"/></svg>
<span class="t r" style="left:1490px;top:397px">Menus</span>
<div style="left:1457px;top:421px;width:149px;height:1px;background:#dfe3e8"></div>
<div style="left:1461px;top:435px;width:10px;height:11px;background:#0d6efd;color:#fff;font:bold 8px/11px 'Liberation Sans',sans-serif;text-align:center">A</div>
<div style="left:1472px;top:435px;width:10px;height:11px;background:#0d6efd;color:#fff;font:bold 8px/11px 'Liberation Sans',sans-serif;text-align:center">★</div>
<span class="t r" style="left:1490px;top:432px">Language</span>
<div style="left:1457px;top:457px;width:149px;height:1px;background:#dfe3e8"></div>
<svg style="left:1462px;top:468px" width="18" height="16" viewBox="0 0 18 16"><path d="M3.500 0v14M.5 11l3 3.500 3-3.500M9 1h2.500M9 5.500h5M9 10h7M9 14.500h9" fill="none" stroke="#0d6efd" stroke-width="1.800"/></svg>
<span class="t r" style="left:1490px;top:468px">Priority</span>
<div style="left:1457px;top:492px;width:149px;height:1px;background:#dfe3e8"></div>
<svg style="left:1462px;top:505px" width="19" height="13" viewBox="0 0 19 13"><rect width="19" height="13" rx="1.500" fill="#0d6efd"/><path d="M3 2.500h15v1.800H3zM3 6h7v1.500H3zM11 6h7v1.500h-7zM3 9.300h7v1.500H3zM11 9.300h7v1.500h-7z" fill="#f4f6f9"/></svg>
<span class="t r" style="left:1490px;top:503px">Editor</span>
<div style="left:1457px;top:528px;width:149px;height:1px;background:#dfe3e8"></div>
<svg style="left:1597px;top:324px;color:#0d6efd" width="10" height="14"><use href="#cl"/></svg>
<svg style="left:1597px;top:363px;color:#0d6efd" width="10" height="14"><use href="#cl"/></svg>
<svg style="left:1597px;top:399px;color:#0d6efd" width="10" height="14"><use href="#cl"/></svg>
<svg style="left:1597px;top:434px;color:#0d6efd" width="10" height="14"><use href="#cl"/></svg>
<svg style="left:1597px;top:470px;color:#0d6efd" width="10" height="14"><use href="#cl"/></svg>
<svg style="left:1597px;top:505px;color:#0d6efd" width="10" height="14"><use href="#cl"/></svg>

<!-- page scrollbar -->
<div style="left:1631px;top:130px;width:19px;height:743px;background:#f1f1f1"></div>
<div style="left:1631px;top:148px;width:15px;height:539px;background:#c1c1c1"></div>
<div style="left:1646px;top:130px;width:4px;height:743px;background:#fbfbfb"></div>
<div style="left:1634px;top:138px;width:0;height:0;border:4px solid transparent;border-top:0;border-bottom:5px solid #a3a3a3"></div>
<div style="left:1634px;top:863px;width:0;height:0;border:4px solid transparent;border-bottom:0;border-top:5px solid #505050"></div>
</body></html>
